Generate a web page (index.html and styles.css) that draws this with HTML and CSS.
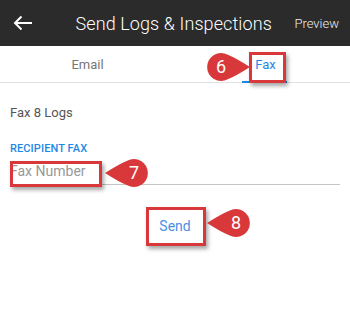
FILE: index.html
```html
<!DOCTYPE html>
<html lang="en">
<head>
  <meta charset="UTF-8">
  <title>Send Logs &amp; Inspections</title>
  <link rel="stylesheet" href="styles.css">
</head>
<body>

  <!-- TOP BAR -->
  <header class="topbar">
    <span class="back">
      <svg width="20" height="16" viewBox="0 0 20 16"><path d="M19 8H2M8.5 1.5L2 8l6.5 6.5" fill="none" stroke="#fff" stroke-width="2"/></svg>
    </span>
    <h1 class="title">Send Logs &amp; Inspections</h1>
    <span class="preview">Preview</span>
  </header>

  <!-- TABS -->
  <nav class="tabs">
    <div class="tab">Email</div>
    <div class="tab active"><span>Fax</span></div>
  </nav>

  <main class="content">
    <p class="count">Fax 8 Logs</p>

    <label class="field-label" for="fax">RECIPIENT FAX</label>
    <input id="fax" class="field" type="text" placeholder="Fax Number">

    <div class="actions">
      <button class="send">Send</button>
    </div>
  </main>

  <!-- ANNOTATIONS (callout boxes + numbered markers) -->
  <div class="hl hl-fax"></div>
  <div class="hl hl-input"></div>
  <div class="hl hl-send"></div>

  <svg class="marker m6" width="46" height="30" viewBox="0 0 46 30">
    <path d="M44 15Q30 6 21.8 2.7A14 14 0 1 0 21.8 27.3Q30 24 44 15Z"/>
    <text x="15" y="21">6</text>
  </svg>
  <svg class="marker m7" width="46" height="30" viewBox="0 0 46 30">
    <path d="M2 15Q16 6 24.2 2.7A14 14 0 1 1 24.2 27.3Q16 24 2 15Z"/>
    <text x="31" y="21">7</text>
  </svg>
  <svg class="marker m8" width="46" height="30" viewBox="0 0 46 30">
    <path d="M2 15Q16 6 24.2 2.7A14 14 0 1 1 24.2 27.3Q16 24 2 15Z"/>
    <text x="31" y="21">8</text>
  </svg>

</body>
</html>
```

FILE: styles.css
```css
/* ------------------------------
   BASIC STYLES
------------------------------ */
* {
  box-sizing: border-box;
  margin: 0;
  padding: 0;
}

body {
  font-family: Roboto, "Liberation Sans", sans-serif;
  background: #fff;
  color: #444;
  width: 350px;
  height: 314px;
  position: relative;
  overflow: hidden;
}

/* ------------------------------
   TOP BAR
------------------------------ */
.topbar {
  height: 46px;
  background: #2b2b2b;
  color: #fff;
  display: flex;
  align-items: center;
  padding: 0 11px 0 13px;
}

.back {
  display: flex;
  width: 20px;
}

.title {
  flex: 1;
  text-align: center;
  font-size: 18px;
  font-weight: 300;
  letter-spacing: 0.1px;
  padding-left: 20px;
}

.preview {
  font-size: 13px;
  font-weight: 300;
  color: #eee;
}

/* ------------------------------
   TABS
------------------------------ */
.tabs {
  display: flex;
  height: 37px;
  border-bottom: 1px solid #e2e2e2;
}

.tab {
  flex: 1;
  display: flex;
  justify-content: center;
  align-items: center;
  font-size: 13px;
  color: #777;
}

.tab.active {
  color: #1e88e5;
  align-items: stretch;
}

.tab.active span {
  display: flex;
  align-items: center;
  padding: 2px 11px 0 13px;
  margin-left: 4px;
  border-bottom: 2px solid #1e88e5;
  margin-bottom: -1px;
}

/* ------------------------------
   FORM
------------------------------ */
.content {
  padding: 0 10px;
}

.count {
  font-size: 13px;
  color: #555;
  margin-top: 22px;
}

.field-label {
  display: block;
  margin-top: 22px;
  font-size: 11px;
  font-weight: 500;
  color: #1e88e5;
  letter-spacing: 0.1px;
}

.field {
  display: block;
  width: 100%;
  border: none;
  border-bottom: 1px solid #c4c4c4;
  font-family: inherit;
  font-size: 14px;
  color: #444;
  padding: 4px 0 5px;
  margin-top: 4px;
  outline: none;
}

.field::placeholder {
  color: #999;
}

.actions {
  display: flex;
  justify-content: center;
  margin-top: 23px;
}

.send {
  background: none;
  border: none;
  font-family: inherit;
  font-size: 14px;
  color: #4a90e2;
  padding: 10px 14px;
}

/* ------------------------------
   ANNOTATIONS
------------------------------ */
.hl {
  position: absolute;
  border: 3px solid #d9383a;
  box-shadow: 2px 3px 4px rgba(0, 0, 0, 0.35);
}

.hl-fax   { left: 249px; top: 52px;  width: 37px; height: 31px; }
.hl-input { left: 10px;  top: 161px; width: 92px; height: 26px; }
.hl-send  { left: 146px; top: 207px; width: 60px; height: 39px; }

.marker {
  position: absolute;
  overflow: visible;
}

.marker path {
  fill: #d9383a;
}

.marker text {
  fill: #fff;
  font-family: Roboto, "Liberation Sans", sans-serif;
  font-size: 18px;
  text-anchor: middle;
}

.m6 { left: 206px; top: 52px; }
.m7 { left: 103px; top: 158px; }
.m8 { left: 205px; top: 208px; }
```
